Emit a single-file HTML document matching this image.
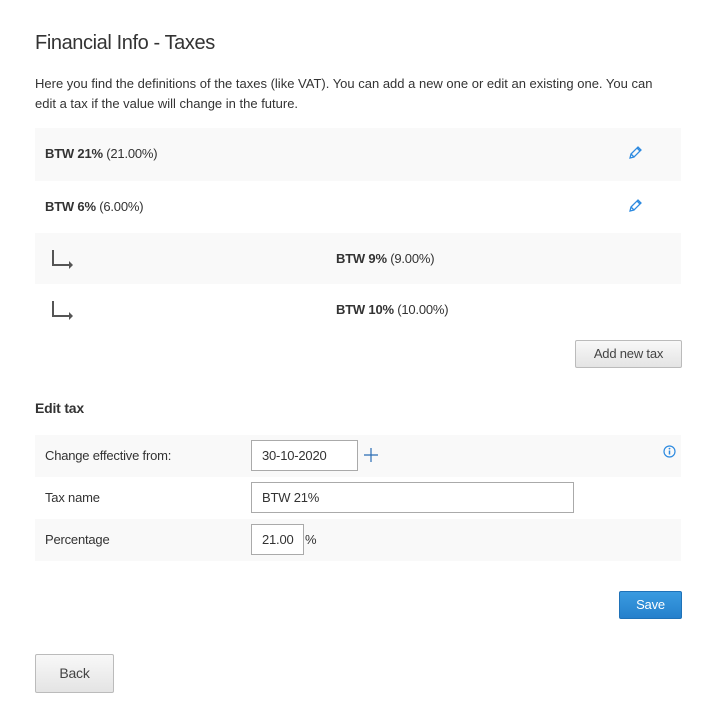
<!DOCTYPE html>
<html><head><style>
*{box-sizing:border-box;margin:0;padding:0}
body{width:715px;height:721px;background:#fff;font-family:"Liberation Sans",sans-serif;color:#333;font-size:13px;position:relative;overflow:hidden;letter-spacing:-0.2px}
.a{position:absolute}
.row{position:absolute;left:35px;width:646px}
.g{background:#f9f9f9}
b{font-weight:bold}
input{position:absolute;border:1px solid #aaa;background:#fff;font:13px "Liberation Sans",sans-serif;color:#333;padding-left:10px;height:31px;letter-spacing:-0.2px}
.btn{position:absolute;border:1px solid #bbb;border-radius:2px;background:linear-gradient(#f8f8f8,#e4e4e4);text-align:center;color:#444}
</style></head><body>
<div class="a" style="left:35px;top:32px;font-size:20px;color:#333;letter-spacing:-0.4px">Financial Info - Taxes</div>
<div class="a" style="left:35px;top:74px;width:680px;line-height:20px;font-size:13px;white-space:nowrap;letter-spacing:0">Here you find the definitions of the taxes (like VAT). You can add a new one or edit an existing one. You can<br>edit a tax if the value will change in the future.</div>

<div class="row g" style="top:128px;height:53px"><div class="a" style="left:10px;top:18px"><b>BTW 21%</b> (21.00%)</div>
<svg class="a" style="left:592px;top:17px" width="16" height="16" viewBox="0 0 16 16"><path d="M3 13l1-4 7-7 3 3-7 7z M4 9l3 3 M10 3l3 3" fill="none" stroke="#2d8ae0" stroke-width="1.3"/></svg></div>
<div class="row" style="top:181px;height:52px"><div class="a" style="left:10px;top:18px"><b>BTW 6%</b> (6.00%)</div>
<svg class="a" style="left:592px;top:17px" width="16" height="16" viewBox="0 0 16 16"><path d="M3 13l1-4 7-7 3 3-7 7z M4 9l3 3 M10 3l3 3" fill="none" stroke="#2d8ae0" stroke-width="1.3"/></svg></div>
<div class="row g" style="top:233px;height:51px"><svg class="a" style="left:16px;top:16px" width="24" height="20"><path d="M2 1v15h17" fill="none" stroke="#555" stroke-width="2"/><path d="M18 12l4 4-4 4z" fill="#555"/></svg><div class="a" style="left:301px;top:18px"><b>BTW 9%</b> (9.00%)</div></div>
<div class="row" style="top:284px;height:51px"><svg class="a" style="left:16px;top:16px" width="24" height="20"><path d="M2 1v15h17" fill="none" stroke="#555" stroke-width="2"/><path d="M18 12l4 4-4 4z" fill="#555"/></svg><div class="a" style="left:301px;top:18px"><b>BTW 10%</b> (10.00%)</div></div>

<div class="btn" style="left:575px;top:340px;width:107px;height:28px;line-height:26px">Add new tax</div>

<div class="a" style="left:35px;top:400px;font-size:14px;font-weight:bold">Edit tax</div>
<div class="row g" style="top:435px;height:42px"><div class="a" style="left:10px;top:13px">Change effective from:</div>
<svg class="a" style="left:328px;top:12px" width="16" height="16"><path d="M8 1v14M1 8h14" stroke="#2a6db5" stroke-width="1.2"/></svg>
<svg class="a" style="left:628px;top:10px" width="13" height="13"><circle cx="6.5" cy="6.5" r="5.5" fill="none" stroke="#2d8ae0" stroke-width="1.2"/><path d="M6.5 5.5v4" stroke="#2d8ae0" stroke-width="1.5"/><circle cx="6.5" cy="3.6" r=".9" fill="#2d8ae0"/></svg></div>
<div class="row" style="top:477px;height:42px"><div class="a" style="left:10px;top:13px">Tax name</div></div>
<div class="row g" style="top:519px;height:42px"><div class="a" style="left:10px;top:13px">Percentage</div><div class="a" style="left:270px;top:13px">%</div></div>
<input style="left:251px;top:440px;width:107px" value="30-10-2020">
<input style="left:251px;top:482px;width:323px" value="BTW 21%">
<input style="left:251px;top:524px;width:53px;padding-right:4px" value="21.00">

<div class="a" style="left:619px;top:591px;width:63px;height:28px;border:1px solid #1f72b8;border-radius:2px;background:linear-gradient(#3a9be0,#2580cc);color:#fff;text-align:center;line-height:26px">Save</div>
<div class="btn" style="left:35px;top:654px;width:79px;height:39px;line-height:37px;font-size:14px">Back</div>
</body></html>
